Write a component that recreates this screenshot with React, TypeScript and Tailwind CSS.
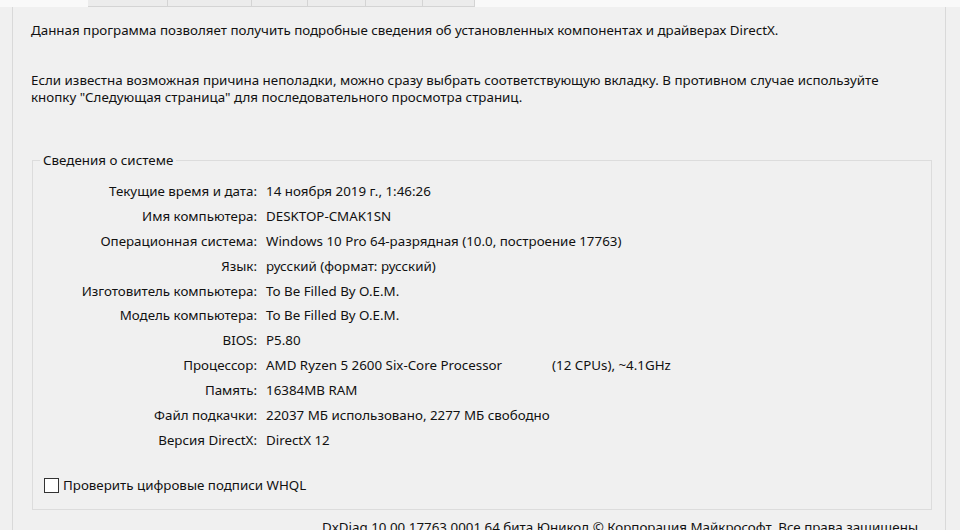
const rows: [string, string][] = [
  ['Текущие время и дата:', '14 ноября 2019 г., 1:46:26'],
  ['Имя компьютера:', 'DESKTOP-CMAK1SN'],
  ['Операционная система:', 'Windows 10 Pro 64-разрядная (10.0, построение 17763)'],
  ['Язык:', 'русский (формат: русский)'],
  ['Изготовитель компьютера:', 'To Be Filled By O.E.M.'],
  ['Модель компьютера:', 'To Be Filled By O.E.M.'],
  ['BIOS:', 'P5.80'],
  ['Процессор:', ''],
  ['Память:', '16384MB RAM'],
  ['Файл подкачки:', '22037 МБ использовано, 2277 МБ свободно'],
  ['Версия DirectX:', 'DirectX 12'],
];

const tabs = [80, 84, 56, 58, 57, 52];

export default function App() {
  return (
    <div
      className="w-[960px] h-[530px] overflow-hidden bg-[#f0f0f0] text-[13.35px] leading-[17px] text-[#111]"
      style={{ fontFamily: '"Noto Sans", "Segoe UI", sans-serif' }}
    >
      {/* tab strip (cut off) */}
      <div className="flex h-[7px] bg-[#f9f9f9]">
        <div className="w-[88px]" />
        {tabs.map((w, i) => (
          <div key={i} className="h-full border-r border-b border-[#d4d4d4] bg-[#ececec] first:border-l" style={{ width: w }} />
        ))}
      </div>

      {/* panel */}
      <div className="ml-[12px] w-[934px] h-[540px] border-l border-r border-[#d9d9d9] pl-[18px] pt-[15px]">
        <p className="whitespace-nowrap">Данная программа позволяет получить подробные сведения об установленных компонентах и драйверах DirectX.</p>
        <p className="mt-[33px] w-[862px]">
          Если известна возможная причина неполадки, можно сразу выбрать соответствующую вкладку. В противном случае используйте кнопку "Следующая страница" для последовательного просмотра страниц.
        </p>

        <fieldset className="mt-[46px] ml-[1px] w-[900px] border border-[#dcdcdc] p-0 m-0 pb-[15px]">
          <legend className="ml-[7px] px-[3px]">Сведения о системе</legend>
          <div className="pt-[10px] grid grid-cols-[224px_1fr] gap-x-[9px]">
            {rows.map(([k, v]) => (
              <div key={k} className="contents">
                <div className="h-[24.9px] flex items-center justify-end whitespace-nowrap">{k}</div>
                <div className="h-[24.9px] flex items-center whitespace-nowrap">
                  {k === 'Процессор:' ? (
                    <>
                      <span className="w-[286px]">AMD Ryzen 5 2600 Six-Core Processor</span>
                      <span>(12 CPUs), ~4.1GHz</span>
                    </>
                  ) : (
                    v
                  )}
                </div>
              </div>
            ))}
          </div>
          <label className="mt-[24px] ml-[11px] flex items-center h-[17px]">
            <span className="w-[15px] h-[15px] border border-[#333] bg-white mr-[4px]" />
            Проверить цифровые подписи WHQL
          </label>
        </fieldset>

        <div className="mt-[9px] pl-[291px] whitespace-nowrap">
          DxDiag 10.00.17763.0001 64 бита Юникод  © Корпорация Майкрософт. Все права защищены.
        </div>
      </div>
    </div>
  );
}
